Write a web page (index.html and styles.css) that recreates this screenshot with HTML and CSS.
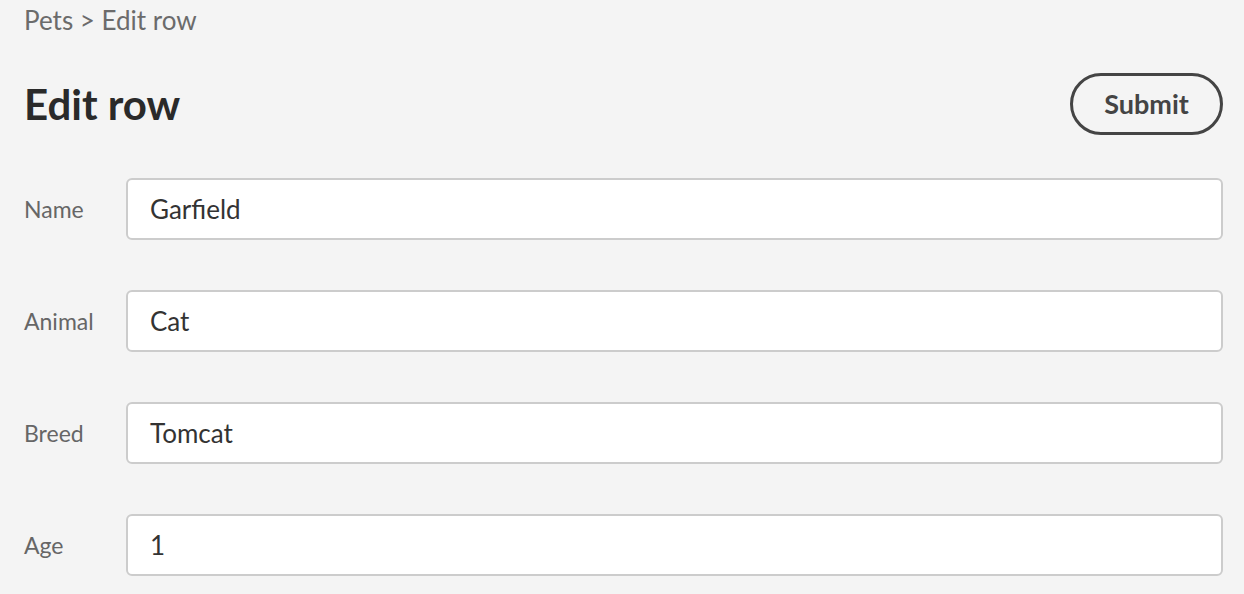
FILE: index.html
```html
<!DOCTYPE html>
<html>
<head>
<meta charset="utf-8">
<link rel="stylesheet" href="styles.css">
</head>
<body>
<div class="page">
  <div class="breadcrumb">Pets &gt; Edit row</div>
  <div class="header">
    <h1 class="title">Edit row</h1>
    <button class="submit">Submit</button>
  </div>
  <form class="form">
    <div class="row"><label class="label">Name</label><div class="input">Garfield</div></div>
    <div class="row"><label class="label">Animal</label><div class="input">Cat</div></div>
    <div class="row"><label class="label">Breed</label><div class="input">Tomcat</div></div>
    <div class="row"><label class="label">Age</label><div class="input">1</div></div>
  </form>
</div>
</body>
</html>
```
FILE: styles.css
```css
html, body {
  margin: 0;
  padding: 0;
  background: #f4f4f4;
}
.page {
  padding: 0 21px 0 24px;
  font-family: "Lato", "Liberation Sans", sans-serif;
}
.breadcrumb {
  height: 40px;
  line-height: 40px;
  font-size: 26px;
  color: #6b6b6b;
}
.header {
  display: flex;
  align-items: center;
  justify-content: space-between;
  height: 127px;
}
.title {
  margin: 0;
  font-size: 42px;
  font-weight: 700;
  color: #2a2a2a;
}
.submit {
  width: 153px;
  height: 62px;
  border: 3px solid #444;
  border-radius: 31px;
  background: transparent;
  font-family: inherit;
  font-size: 27px;
  font-weight: 700;
  color: #444;
  padding: 0;
}
.form {
  display: flex;
  flex-direction: column;
  gap: 50px;
  margin-top: 11px;
}
.row {
  display: flex;
  align-items: center;
}
.label {
  width: 102px;
  font-size: 23px;
  color: #666;
}
.input {
  flex: 1;
  height: 58px;
  border: 2px solid #cccccc;
  border-radius: 6px;
  background: #fff;
  box-sizing: content-box;
  padding: 0 22px;
  display: flex;
  align-items: center;
  font-size: 26px;
  color: #333;
}
```
